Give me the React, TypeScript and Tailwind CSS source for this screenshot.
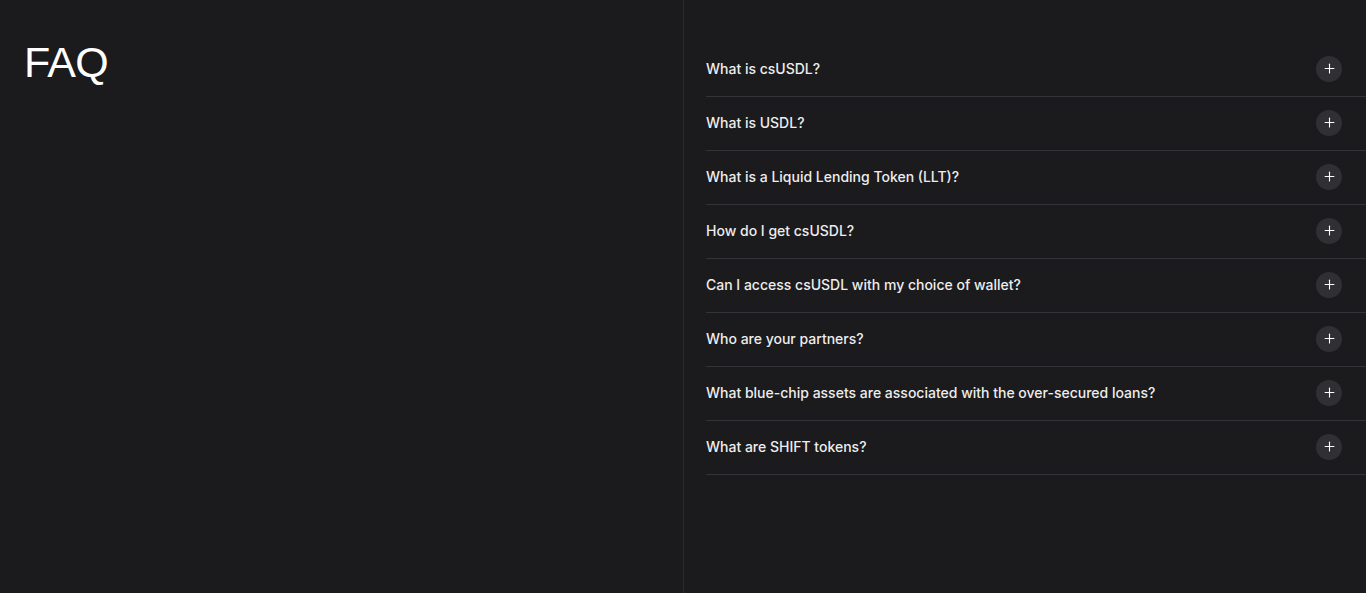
import { Plus } from 'lucide-react';

const QUESTIONS = [
  'What is csUSDL?',
  'What is USDL?',
  'What is a Liquid Lending Token (LLT)?',
  'How do I get csUSDL?',
  'Can I access csUSDL with my choice of wallet?',
  'Who are your partners?',
  'What blue-chip assets are associated with the over-secured loans?',
  'What are SHIFT tokens?',
];

export default function App() {
  return (
    <div className="flex h-[593px] w-full bg-[#1b1a1d] text-white overflow-hidden" style={{ fontFamily: 'Inter, "Liberation Sans", sans-serif' }}>
      <div className="w-[684px] shrink-0 border-r border-[#2a292c] px-6 pt-[41px]">
        <h2 className="text-[43px] leading-none font-normal tracking-[-0.6px]" style={{ fontFamily: '"Liberation Sans", Arial, sans-serif' }}>FAQ</h2>
      </div>
      <div className="flex-1 pl-[22px] pt-[43px]">
        {QUESTIONS.map(q => (
          <div key={q} className="flex h-[54px] items-center justify-between border-b border-[#343337] pb-[2px] pr-[24px]">
            <span className="text-[14px] font-medium text-[#ededed]">{q}</span>
            <span className="flex h-[26px] w-[26px] items-center justify-center rounded-full bg-[#302f33]">
              <Plus className="h-[15px] w-[15px] text-white" strokeWidth={1.75} />
            </span>
          </div>
        ))}
      </div>
    </div>
  );
}
